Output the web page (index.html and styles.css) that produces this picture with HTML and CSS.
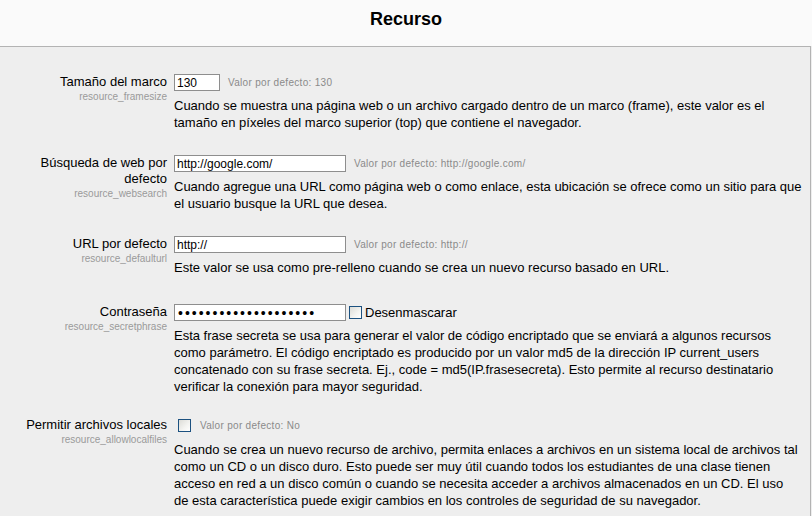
FILE: index.html
```html
<!DOCTYPE html>
<html lang="es">
<head>
<meta charset="utf-8">
<title>Recurso</title>
<link rel="stylesheet" href="styles.css">
</head>
<body>
<header class="page-head">
  <h2 class="page-title">Recurso</h2>
</header>
<main class="panel">
  <div class="item">
    <div class="label-col">
      <label class="label" for="framesize">Tamaño del marco</label>
      <span class="setting-name">resource_framesize</span>
    </div>
    <div class="setting-col">
      <div class="setting-line">
        <input class="text-input short" id="framesize" type="text" value="130">
        <span class="default">Valor por defecto: 130</span>
      </div>
      <div class="desc">Cuando se muestra una página web o un archivo cargado dentro de un marco (frame), este valor es el tamaño en píxeles del marco superior (top) que contiene el navegador.</div>
    </div>
  </div>

  <div class="item">
    <div class="label-col">
      <label class="label" for="websearch">Búsqueda de web por defecto</label>
      <span class="setting-name">resource_websearch</span>
    </div>
    <div class="setting-col">
      <div class="setting-line">
        <input class="text-input long" id="websearch" type="text" value="http://google.com/">
        <span class="default">Valor por defecto: http://google.com/</span>
      </div>
      <div class="desc">Cuando agregue una URL como página web o como enlace, esta ubicación se ofrece como un sitio para que el usuario busque la URL que desea.</div>
    </div>
  </div>

  <div class="item item-wide">
    <div class="label-col">
      <label class="label" for="defaulturl">URL por defecto</label>
      <span class="setting-name">resource_defaulturl</span>
    </div>
    <div class="setting-col">
      <div class="setting-line">
        <input class="text-input long" id="defaulturl" type="text" value="http://">
        <span class="default">Valor por defecto: http://</span>
      </div>
      <div class="desc">Este valor se usa como pre-relleno cuando se crea un nuevo recurso basado en URL.</div>
    </div>
  </div>

  <div class="item item-tight">
    <div class="label-col">
      <label class="label" for="secretphrase">Contraseña</label>
      <span class="setting-name">resource_secretphrase</span>
    </div>
    <div class="setting-col">
      <div class="setting-line unmask-line">
        <input class="text-input long password" id="secretphrase" type="password" value="aaaaaaaaaaaaaaaaaaaa">
        <label class="unmask"><input class="check" type="checkbox">Desenmascarar</label>
      </div>
      <div class="desc">Esta frase secreta se usa para generar el valor de código encriptado que se enviará a algunos recursos como parámetro. El código encriptado es producido por un valor md5 de la dirección IP current_users concatenado con su frase secreta. Ej., code = md5(IP.frasesecreta). Esto permite al recurso destinatario verificar la conexión para mayor seguridad.</div>
    </div>
  </div>

  <div class="item">
    <div class="label-col">
      <label class="label" for="allowlocalfiles">Permitir archivos locales</label>
      <span class="setting-name">resource_allowlocalfiles</span>
    </div>
    <div class="setting-col">
      <div class="setting-line check-line">
        <input class="check" id="allowlocalfiles" type="checkbox">
        <span class="default">Valor por defecto: No</span>
      </div>
      <div class="desc desc-check">Cuando se crea un nuevo recurso de archivo, permita enlaces a archivos en un sistema local de archivos tal como un CD o un disco duro. Esto puede ser muy útil cuando todos los estudiantes de una clase tienen acceso en red a un disco común o cuando se necesita acceder a archivos almacenados en un CD. El uso de esta característica puede exigir cambios en los controles de seguridad de su navegador.</div>
    </div>
  </div>
</main>
</body>
</html>
```

FILE: styles.css
```css
html, body {
  margin: 0;
  padding: 0;
}

body {
  background: #eeeeee;
  font-family: "Liberation Sans", Arial, sans-serif;
  color: #000;
  overflow: hidden;
}

.page-head {
  height: 46px;
  background: #fafafa;
  box-sizing: border-box;
  padding-top: 9px;
}

.page-title {
  margin: 0;
  text-align: center;
  font-size: 18px;
  line-height: 20px;
  font-weight: bold;
  color: #000;
}

.panel {
  display: block;
  width: 811px;
  height: 470px;
  box-sizing: border-box;
  background: #eeeeee;
  border-top: 1px solid #b3b3b3;
  border-right: 1px solid #b3b3b3;
  padding: 27px 7px 0 0;
}

.item {
  display: grid;
  grid-template-columns: 167px 1fr;
  column-gap: 7px;
  margin-bottom: 24px;
}

.item-wide {
  margin-bottom: 28px;
}

.item-tight {
  margin-bottom: 22px;
}

.label-col {
  display: flex;
  flex-direction: column;
  align-items: flex-end;
  text-align: right;
}

.label {
  font-size: 13px;
  line-height: 16px;
  color: #000;
}

.setting-name {
  font-size: 10px;
  line-height: 14px;
  color: #9a9a9a;
}

.setting-line {
  display: flex;
  align-items: center;
  height: 17px;
  gap: 8px;
}

.text-input {
  box-sizing: border-box;
  height: 17px;
  margin: 0;
  padding: 0 2px;
  border: 1px solid #8e8e8e;
  background: #fff;
  font-family: "Liberation Sans", Arial, sans-serif;
  font-size: 12px;
  color: #000;
  outline: none;
}

.short {
  width: 46px;
}

.long {
  width: 172px;
}

.password {
  font-size: 14px;
  letter-spacing: 2px;
  padding-left: 3px;
}

.default {
  font-size: 10px;
  letter-spacing: 0.3px;
  color: #8a8a8a;
  white-space: nowrap;
}

.unmask-line {
  gap: 3px;
}

.unmask {
  display: flex;
  align-items: center;
  gap: 3px;
  font-size: 13px;
  color: #000;
}

.check {
  appearance: none;
  -webkit-appearance: none;
  box-sizing: border-box;
  width: 13px;
  height: 13px;
  margin: 0;
  border: 1px solid #1c5180;
  background: linear-gradient(135deg, #dcdcd7 0%, #f4f4f1 60%, #ffffff 100%);
}

.check-line {
  gap: 9px;
  padding-left: 4px;
}

.desc {
  margin-top: 6px;
  font-size: 13px;
  line-height: 17px;
  color: #000;
}

.desc-check {
  margin-top: 7px;
  margin-right: 4px;
}
```
